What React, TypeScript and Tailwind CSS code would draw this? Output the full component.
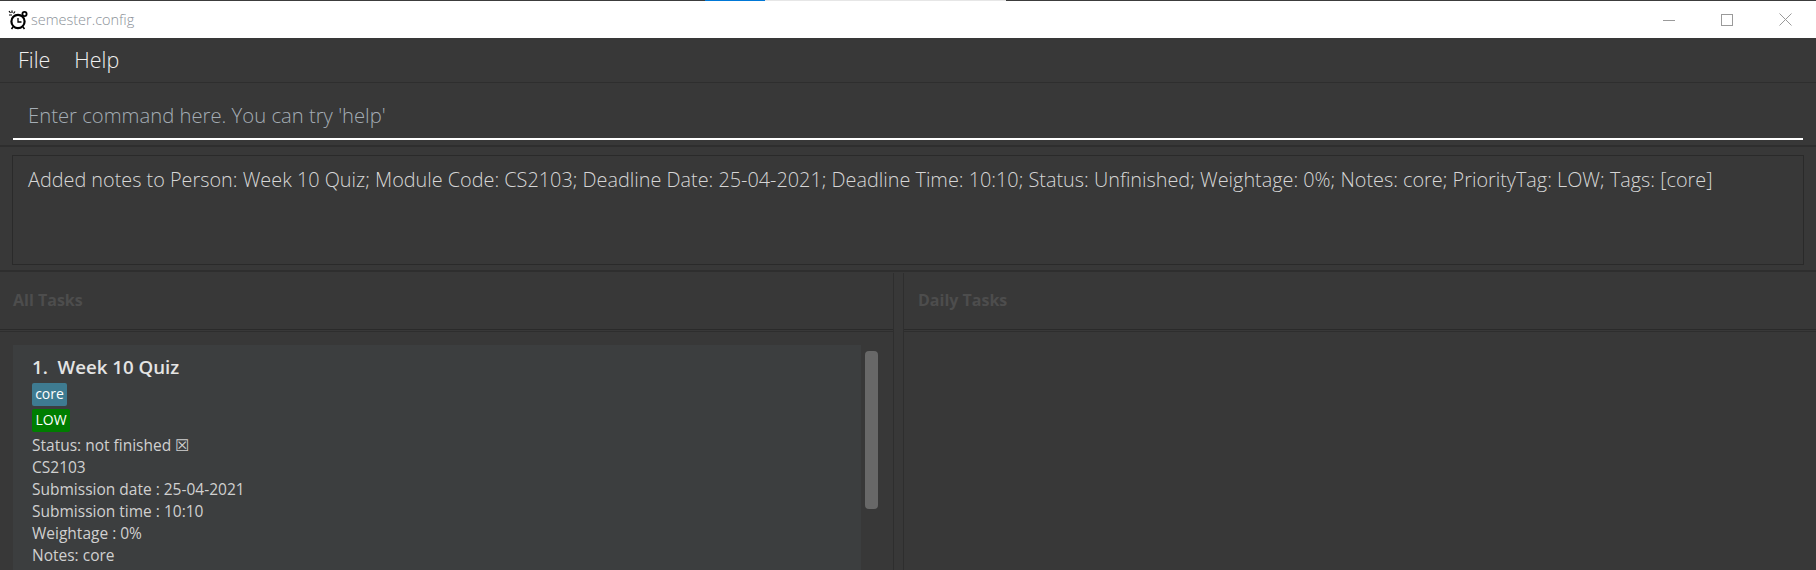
import React from "react";

const font = { fontFamily: '"Open Sans", sans-serif' };

function AppIcon() {
  return (
    <svg width="20" height="20" viewBox="0 0 20 20" className="shrink-0">
      <circle cx="10" cy="11.5" r="6.6" fill="#fff" stroke="#000" strokeWidth="2.2" />
      <path d="M10 8v4h3.5" fill="none" stroke="#000" strokeWidth="1.3" />
      <circle cx="16.5" cy="4" r="3" fill="#000" />
      <circle cx="16.5" cy="4" r="1.2" fill="#fff" />
      <path d="M1 1l1.5 2M4 0.5v2.5M7 1.5L5.5 3.5M1 5h3" stroke="#000" strokeWidth="1.2" />
      <path d="M5 17l-1.5 2M15 17l1.5 2" stroke="#000" strokeWidth="1.6" />
    </svg>
  );
}

function TitleBar() {
  return (
    <div className="h-[37px] shrink-0 bg-white flex items-center justify-between">
      <div className="flex items-center gap-[3px] pl-[8px]">
        <AppIcon />
        <span className="text-[14.5px] font-light text-[#8b9198]">semester.config</span>
      </div>
      <div className="flex items-center gap-[46px] pr-[24px] text-[#9a9a9a]">
        <svg width="12" height="12" viewBox="0 0 12 12">
          <path d="M0 6.5h12" stroke="currentColor" />
        </svg>
        <svg width="12" height="12" viewBox="0 0 12 12">
          <rect x="0.5" y="0.5" width="11" height="11" fill="none" stroke="currentColor" />
        </svg>
        <svg width="13" height="13" viewBox="0 0 13 13">
          <path d="M0.5 0.5l12 12M12.5 0.5l-12 12" stroke="currentColor" />
        </svg>
      </div>
    </div>
  );
}

function TaskCard() {
  const lines = [
    "Status: not finished ☒",
    "CS2103",
    "Submission date : 25-04-2021",
    "Submission time : 10:10",
    "Weightage : 0%",
    "Notes: core",
  ];
  return (
    <div className="flex-1 h-[240px] bg-[#3c3e3f] pl-[19px] pt-[10px]">
      <div className="text-[18.7px] leading-[24px] font-semibold text-[#e4e4e4] whitespace-pre">1.  Week 10 Quiz</div>
      <div className="mt-[4px] flex flex-col items-start gap-[3px]">
        <span className="h-[23px] w-[35px] rounded-[2px] bg-[#3e7b91] text-center text-white text-[14px] leading-[22px]">core</span>
        <span className="h-[23px] w-[38px] rounded-[2px] bg-[#007d00] text-center text-white text-[14px] leading-[22px]">LOW</span>
      </div>
      <div className="mt-[2px] text-[15.5px] leading-[22px] text-[#d0d0d0]">
        {lines.map((line) => (
          <div key={line}>{line}</div>
        ))}
      </div>
    </div>
  );
}

export default function App() {
  return (
    <div className="w-[1816px] h-[570px] overflow-hidden bg-[#383838] flex flex-col relative" style={font}>
      <div className="h-[1px] shrink-0 flex bg-[#3c3c3c]">
        <div className="w-[705px]" />
        <div className="w-[60px] bg-[#0078d7]" />
        <div className="w-[241px] bg-[#e6e6e6]" />
      </div>
      <TitleBar />

      <div className="h-[45px] shrink-0 flex items-center gap-[24px] pl-[18px] border-b border-[#2e2e2e] text-[21.5px] font-light text-[#f0f0f0]">
        <span>File</span>
        <span>Help</span>
      </div>

      <div className="h-[64px] shrink-0 border-b-2 border-[#2e2e2e] px-[13px] flex">
        <div className="flex-1 h-[57px] border-b-2 border-white pl-[15px] pt-[17px] text-[20.26px] leading-[30px] font-light text-[#a4adb5]">
          Enter command here. You can try 'help'
        </div>
      </div>

      <div className="h-[125px] shrink-0 border-b-2 border-[#2e2e2e] px-[12px] pt-[8px]">
        <div className="h-[110px] border border-[#2a2a2a] pl-[15px] pt-[9px] text-[19.83px] leading-[30px] font-light text-[#d6d6d6] whitespace-nowrap">
          Added notes to Person: Week 10 Quiz; Module Code: CS2103; Deadline Date: 25-04-2021; Deadline Time: 10:10; Status: Unfinished; Weightage: 0%; Notes: core; PriorityTag: LOW; Tags: [core]
        </div>
      </div>

      <div className="flex-1 flex gap-[9px] pt-[1px] min-h-0">
        <div className="w-[894px] flex flex-col border-r border-[#2e2e2e]">
          <div className="h-[57px] shrink-0 border-b border-[#2a2a2a] pl-[13px] pb-[2px] flex items-center text-[16px] font-bold text-[#4d4d4d]">
            All Tasks
          </div>
          <div className="flex-1 mt-[1px] border-t border-[#2e2e2e] pl-[13px] pr-[15px] pt-[13px] flex gap-[4px] min-h-0">
            <TaskCard />
            <div className="w-[13px] h-[158px] mt-[6px] rounded-[4px] bg-[#686868]" />
          </div>
        </div>
        <div className="flex-1 flex flex-col border-l border-[#2e2e2e]">
          <div className="h-[57px] shrink-0 border-b border-[#2a2a2a] pl-[14px] pb-[2px] flex items-center text-[16px] font-bold text-[#4d4d4d]">
            Daily Tasks
          </div>
          <div className="flex-1 mt-[1px] border-t border-[#2e2e2e]" />
        </div>
      </div>
    </div>
  );
}
